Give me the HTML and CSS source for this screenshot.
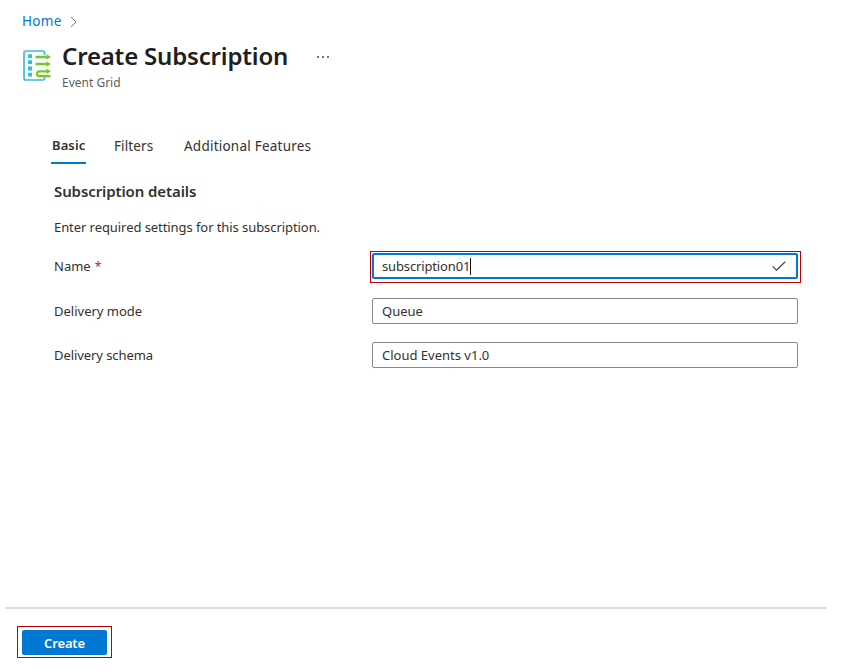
FILE: index.html
```html
<!DOCTYPE html>
<html lang="en">
<head>
<meta charset="utf-8">
<title>Create Subscription</title>
<link rel="stylesheet" href="styles.css">
</head>
<body>
<div class="page">
  <nav class="breadcrumb">
    <a class="home" href="#">Home</a>
    <svg class="chevron" width="7" height="12" viewBox="0 0 7 12"><path d="M1 1l5 5-5 5" fill="none" stroke="#777" stroke-width="1"/></svg>
  </nav>
  <header class="heading">
    <svg class="logo" width="29" height="32" viewBox="0 0 29 32">
      <path d="M21.500 5V2.500Q21.500 1 20 1H3Q1 1 1 3V28Q1 30 3 30H20Q21.500 30 21.500 28.500V27" fill="#f8fdfe" stroke="#45b7d8" stroke-width="1.700"/>
      <path d="M5 4.200h4v3.800H5zM5 10.300h4v3.800H5zM5 16.600h4v3.800H5zM5 22.800h4v3.800H5z" fill="#32bbe0"/>
      <path d="M12.500 7H24M12.500 14H24M24 21.300H16.500a2.400 2.400 0 0 0 0 4.800H27.500" fill="none" stroke="#78c928" stroke-width="2.300"/>
      <path d="M23.500 4.200L28 7l-4.500 2.800zM23.500 11.200l4.500 2.800-4.500 2.800zM23.500 18.500l4.500 2.800-4.500 2.800z" fill="#78c928"/>
    </svg>
    <div class="titles">
      <h1 class="title">Create Subscription</h1>
      <p class="subtitle">Event Grid</p>
    </div>
    <svg class="more" width="14" height="4" viewBox="0 0 14 4"><path d="M1 1h2v2H1zM6 1h2v2H6zM11 1h2v2h-2z" fill="#777"/></svg>
  </header>
  <div class="tabs">
    <div class="tab active">Basic</div>
    <div class="tab filters">Filters</div>
    <div class="tab features">Additional Features</div>
  </div>
  <main class="form">
    <h2 class="section">Subscription details</h2>
    <p class="intro">Enter required settings for this subscription.</p>
    <div class="row first">
      <label class="label"><span class="name">Name</span><span class="required">*</span></label>
      <div class="highlight">
        <div class="field focused"><span class="v-name">subscription01</span><span class="caret"></span>
          <svg class="check" width="14" height="10" viewBox="0 0 14 10"><path d="M.7 5.300L4.500 9.100 13.200.7" fill="none" stroke="#444" stroke-width="1.200"/></svg>
        </div>
      </div>
    </div>
    <div class="row">
      <label class="label">Delivery mode</label>
      <div class="field"><span>Queue</span></div>
    </div>
    <div class="row">
      <label class="label l-schema">Delivery schema</label>
      <div class="field"><span>Cloud Events v1.0</span></div>
    </div>
  </main>
  <footer class="footer">
    <div class="button-highlight"><button class="create">Create</button></div>
  </footer>
</div>
</body>
</html>
```
FILE: styles.css
```css
* { box-sizing: border-box; }
body { margin: 0; background: #fff; color: #323130; font: 13px/18px "Noto Sans", "Open Sans", sans-serif; }
h1, h2, p { margin: 0; }
.page { display: flex; flex-direction: column; width: 841px; height: 671px; white-space: nowrap; overflow: hidden; }
.breadcrumb { display: flex; align-items: center; height: 18px; margin: 12px 0 0 22px; gap: 8px; }
.home { color: #0078d4; text-decoration: none; font-size: 13.500px; letter-spacing: .3px; }
.chevron { margin-top: 2px; }
.heading { display: flex; align-items: flex-start; margin: 12px 0 0 23px; height: 50px; }
.logo { margin-top: 8px; }
.titles { width: 253px; margin-left: 10px; }
.title { font-size: 24px; line-height: 32px; font-weight: 600; color: #201f1e; margin-top: -2px; letter-spacing: -.18px; }
.subtitle { font-size: 12px; line-height: 16px; color: #605e5c; margin-top: 3px; }
.more { margin: 13px 0 0 1px; }
.tabs { display: flex; height: 32px; margin: 40px 0 0 51px; }
.tab { height: 32px; line-height: 28px; padding-left: 1px; font-size: 13.500px; letter-spacing: .23px; }
.active { width: 35px; border-bottom: 2px solid #0078d4; font-size: 13px; line-height: 27px; font-weight: 600; letter-spacing: .1px; }
.filters { margin-left: 27px; width: 70px; letter-spacing: .1px; }
.form { margin: 17px 0 0 54px; width: 747px; }
.section { font-size: 15px; line-height: 20px; font-weight: 600; letter-spacing: -.1px; }
.intro { margin-top: 17px; height: 18px; margin-bottom: 15px; letter-spacing: -.07px; }
.row { display: flex; align-items: center; height: 32px; margin-bottom: 12px; }
.first .label { padding-bottom: 2px; }
.label { width: 316px; }
.l-schema { letter-spacing: -.07px; }
.required { color: #a4262c; margin-left: 4px; font-size: 12px; }
.highlight { width: 431px; height: 32px; border: 1px solid #c00000; padding: 1px; }
.field { display: flex; align-items: center; width: 426px; height: 26px; margin-left: 2px; padding-left: 9px; border: 1px solid #8a8886; border-radius: 2px; }
.highlight .field { margin: 0; }
.focused { border: 2px solid #0078d4; padding-left: 8px; }
.v-name { letter-spacing: -.14px; }
.caret { width: 1px; height: 17px; background: #111; }
.check { margin: 0 10px 0 auto; }
.footer { margin: auto 14px 0 5px; height: 64px; border-top: 2px solid #dcdcdc; padding: 17px 0 0 12px; }
.button-highlight { width: 95px; height: 32px; border: 1px solid #c00000; padding: 3px 4px; }
.create { display: block; width: 85px; height: 25px; border: 0; border-radius: 2px; background: #0078d4; color: #fff; font: 600 13px/26px "Noto Sans", sans-serif; letter-spacing: -.15px; padding: 0; }
```
